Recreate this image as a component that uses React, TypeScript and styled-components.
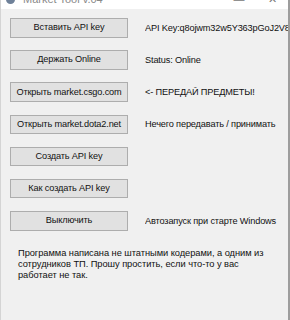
import React from "react"
import styled, { createGlobalStyle } from "styled-components"

const Global = createGlobalStyle`
  html, body {
    margin: 0;
    padding: 0;
    background: #ffffff;
    overflow: hidden;
  }
  body {
    font-family: "Liberation Sans", Arial, sans-serif;
  }
`

const Window = styled.div`
  width: 287px;
  height: 320px;
  display: flex;
  flex-direction: column;
  background: #f0f0f0;
  border-left: 1px solid #d4d4d4;
  border-right: 2px solid #9d9d9d;
  overflow: hidden;
`

const TitleBar = styled.div`
  height: 9px;
  background: #ffffff;
  display: flex;
  align-items: flex-end;
  overflow: hidden;
  padding: 0 6px 0 5px;
`

const TitleInner = styled.div`
  display: flex;
  align-items: center;
  width: 100%;
  height: 16px;
  margin-bottom: 2px;
`

const AppIcon = styled.div`
  width: 9px;
  height: 9px;
  border-radius: 50%;
  background: #6f8199;
  margin-right: 8px;
`

const Title = styled.span`
  font-size: 11px;
  color: #8a8a8a;
  flex: 1;
`

const Control = styled.span<{ $w: number }>`
  width: ${p => p.$w}px;
  display: flex;
  justify-content: center;
  color: #777;
  font-size: 11px;
`

const Body = styled.div`
  display: grid;
  grid-template-columns: 118px 1fr;
  column-gap: 17px;
  row-gap: 12.7px;
  padding: 9px 0 0 9px;
  align-items: center;
`

const Button = styled.button`
  height: 19.5px;
  padding: 0 0 1px;
  background: #e1e1e1;
  border: 1px solid #adadad;
  font-family: "Liberation Sans", Arial, sans-serif;
  font-size: 9.2px;
  letter-spacing: -0.15px;
  color: #111;
  cursor: pointer;
`

const Label = styled.span`
  font-size: 9.2px;
  letter-spacing: -0.15px;
  color: #111;
  white-space: nowrap;
  overflow: hidden;
`

const Note = styled.p`
  margin: 17px 0 0 17px;
  font-size: 9.3px;
  letter-spacing: -0.05px;
  line-height: 11px;
  color: #111;
  white-space: nowrap;
`

const rows = [
  ["Вставить API key", "API Key:q8ojwm32w5Y363pGoJ2V81ak"],
  ["Держать Online", "Status: Online"],
  ["Открыть market.csgo.com", "<- ПЕРЕДАЙ ПРЕДМЕТЫ!"],
  ["Открыть market.dota2.net", "Нечего передавать / принимать"],
  ["Создать API key", ""],
  ["Как создать API key", ""],
  ["Выключить", "Автозапуск при старте Windows"],
]

export default function App() {
  return (
    <>
      <Global />
      <Window>
        <TitleBar>
          <TitleInner>
            <AppIcon />
            <Title>Market Tool v.04</Title>
            <Control $w={46}>—</Control>
            <Control $w={20}>✕</Control>
          </TitleInner>
        </TitleBar>
        <Body>
          {rows.map(([btn, label]) => (
            <React.Fragment key={btn}>
              <Button>{btn}</Button>
              <Label>{label}</Label>
            </React.Fragment>
          ))}
        </Body>
        <Note>
          Программа написана не штатными кодерами, а одним из
          <br />
          сотрудников ТП. Прошу простить, если что-то у вас
          <br />
          работает не так.
        </Note>
      </Window>
    </>
  )
}
